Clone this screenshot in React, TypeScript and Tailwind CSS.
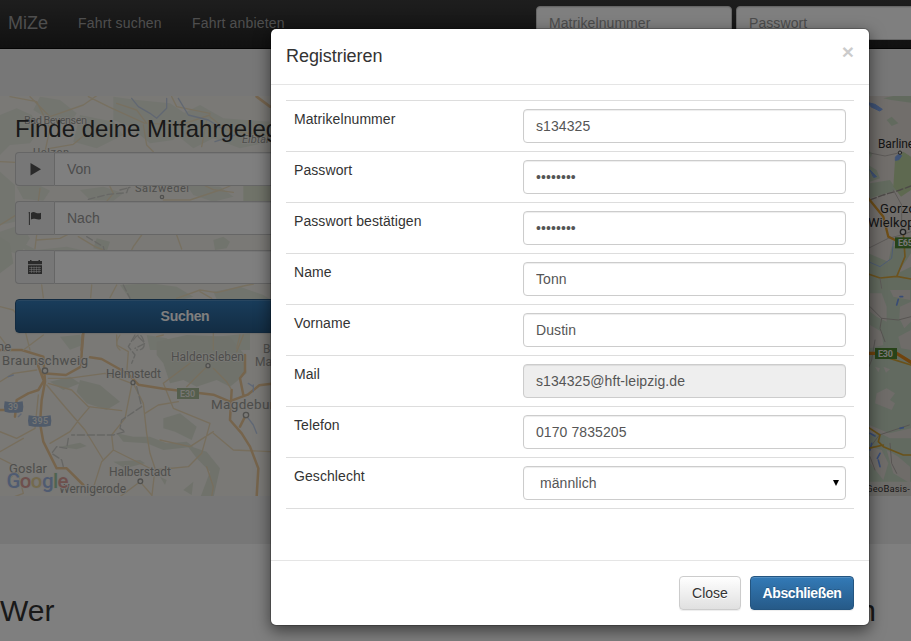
import type { ReactNode } from "react";

const control =
  "block h-[34px] w-full rounded-[4px] border border-[#ccc] px-3 py-1.5 text-[14px] leading-5 tracking-[0.08px] text-[#555] shadow-[inset_0_1px_1px_rgba(0,0,0,0.075)] outline-none placeholder:text-[#999]";

type Field = { label: string; type: "text" | "password" | "readonly" | "select"; value: string };

const fields: Field[] = [
  { label: "Matrikelnummer", type: "text", value: "s134325" },
  { label: "Passwort", type: "password", value: "geheim12" },
  { label: "Passwort bestätigen", type: "password", value: "geheim12" },
  { label: "Name", type: "text", value: "Tonn" },
  { label: "Vorname", type: "text", value: "Dustin" },
  { label: "Mail", type: "readonly", value: "s134325@hft-leipzig.de" },
  { label: "Telefon", type: "text", value: "0170 7835205" },
  { label: "Geschlecht", type: "select", value: "männlich" },
];

function MapBackground() {
  return (
    <svg
      className="absolute inset-0 h-full w-full font-[Roboto,sans-serif]"
      viewBox="0 96 911 400"
      preserveAspectRatio="none"
      fill="none"
      strokeLinejoin="round"
      strokeLinecap="round"
    >
      <rect x="0" y="96" width="911" height="400" fill="#f4f2ec" />
      {/* woodland, north west */}
      <g transform="translate(0 95) scale(.33333)" fill="#e6eadf">
        <path d="M0 60l50-20 45 20 25 45-30 40-60 5-30 30zM120 5l60 10 50 40-20 30-60-10-50-30zM240 60l100 20 30 40-80 40-70-20zM340 5l70 10 100 10 60 40-50 70-70 10-60-50-50-20zM540 60l60-30 70 40 140 10v60l-90 20-80-30-60 30-50-40zM0 230l45 40v110l-45 10z" />
        <path d="M50 275l60-8 40 20-20 30-60-5zM240 285l70-10 60 20-30 22-70-2zM560 270l100 5 40 30-60 15-60-20zM0 410l60-20 30 40-30 50-60-20zM60 440l50 25 90-10 60 14-80 10-100-5z" />
        <path d="M730 273h80v45h-80z" fill="#e1e6d2" />
      </g>
      <g transform="translate(0 220) scale(.33333)" fill="#e3e8da">
        <path d="M0 50l30 20 10 60-40 30zM290 55l40 10-10 30-40-10zM640 60l30-10 20 15-10 20-35 5zM360 195l90-5 80 10 50 30-30 8H390zM640 215l80-15 70 25 20 13H650zM180 350l60-6 10 30-40 15zM440 345l60 10 40 35h-90zM650 350l100-10v50H640z" />
      </g>
      <g transform="translate(0 335) scale(.33333)">
        <g fill="#e0e5d7">
          <path d="M470 20l90-20 130 5 40 50 10 60-50 40-40-20-60 20-40-20-40 10-20-60-20-25zM240 135l60 15 60 50-40 25-60-20-30-35zM150 140l60-15 30 20-50 20zM350 295l50 10 50 0 50 20 60-5 20 15-90 10-50-20-70-5zM490 250l50-15 50 40-15 40-50-25-35-10zM560 330l60 20 40 50-20 90h-40l30-80-40-40zM340 380l80-5 15 10-60 15zM180 335l60-12 20 10-30 10zM480 425l20 10-5 15zM550 465l30-25-5 40z" />
        </g>
        <g stroke="#eedcba" strokeWidth="4">
          <path d="M0 140l40-25 70-10M145 130l60 0 110-15 80 30M145 145l70 20 50 50 100 12M270 215l-30 35-30 40-60 35M140 150l50 60 65 75 55 90 30-30 120 60 105-10 40-40 25-90-110-45-30-75 80-60M395 150l-20 100-40 50 5 45-35 35-35 110M400 145l30 60 10 90 10 60 15 45-10 90M435 235l40-25 60-10M0 290l50 20 55-30 10-100M0 350l70-40M350 0l0 30 35 20-5 65M620 95l-40 40-20 20M640 100l40 40 12 20M640 295l60 50 110 5M620 395l20 60-5 30M0 370l50 25 20 80-40 15M470 5l20-5M730 0l-20 50M420 440l35 40M420 440l-60 45M30 430l30-30M640 290l-70 45-90-20" />
        </g>
        <g stroke="#ecc998" strokeWidth="7.5">
          <path d="M0 45h65l65 20M110 80l22 60M248 0l-5 95-45 25-70-5M270 67l35 5 80 45 30 32 75 12 150 18 48 20 55-20 35-28 37-5M130 65l5 75-10 55-5 70 10 55 40 80h30l50 50M130 140l-15 25-30 10-35 20-5 50M0 225h40M695 165l-5 90 35 40 25 40 25 65-5 85M735 60v50l-15 20 10 50M740 235l-20 40" />
        </g>
        <path d="M405 0l-20 35 20 25-10 25M415 5l20 20-30 15M410 155l15 60-60 40-5 25 15 10-35 10H215M205 310l-5 30-30-5-15 20 30 20 5 20" stroke="#cdcdc8" strokeWidth="4" strokeDasharray="22 8" />
        <path d="M745 145l15 10M760 150v20M745 250l15 20 10 25M55 245l8-8M40 120l-15 5" stroke="#c0d0ea" strokeWidth="4" />
        <g fill="#f4f2ec" stroke="#a0a09c" strokeWidth="4">
          <circle cx="135" cy="107" r="8" />
          <circle cx="399" cy="143" r="6" />
          <circle cx="624" cy="92" r="6" />
          <circle cx="738" cy="240" r="8" />
          <circle cx="421" cy="439" r="7" />
        </g>
        <path d="M14 199q27 7 54 0l2 16-2 15q-27 7-54 0l-2-15z" fill="#a0b6d4" />
        <path d="M86 241q33 7 66 0l2 16-2 15q-33 7-66 0l-2-15z" fill="#a0b6d4" />
        <path d="M531 159h66v33h-66z" fill="#abbd9b" />
      </g>
      {/* minor roads and river, north west */}
      <g transform="translate(0 95) scale(.33333)" stroke="#efe0c1" strokeWidth="4">
        <path d="M30 5l80 15 40 80-15 70M90 5l60 60 100-35 40-28M265 5l60 30 110 50M430 90l10 60 20 20M450 85l90 5 90-30M440 85l-30-40-60-20M515 5l15 30 100 20M620 75l-15 80M630 65l50 40 130 20M0 200l48 2M150 160l70-12 30-25M120 280l-5 38M490 315l80 0 90-30 30-12M330 275l10 20-20 24M610 270l30 14 60 8M0 390l45-28" />
        <path d="M770 5l40 30" stroke="#ecca9e" strokeWidth="8" />
        <path d="M395 10l20 25 35 20 20 15 30-30 0-30M535 10l30 50 60 15 40 25M645 140l60-20" stroke="#c2cfe4" />
        <path d="M265 313l60-15 55-5 5-15M360 285l30-8" stroke="#cfcfca" strokeDasharray="20 9" />
        <circle cx="486" cy="306" r="5" stroke="#a0a09c" />
      </g>
      <g transform="translate(0 220) scale(.33333)" stroke="#efe0c1" strokeWidth="4">
        <path d="M110 45l-5 40M110 60l70-5 40-20M235 50l50 30 30 12M425 45l-25 35-5 10M530 45l15 42M125 195l5 38M275 195l-3 38M350 195l-20 38M530 235l70-25 50 8 80-20 30-6M600 215l35 20M0 260l40 10 30 40 20 80M130 345l-60 45M360 345q-20 30 0 45M640 340v50M720 345l-10 40M0 350l30 40" />
        <path d="M250 340l-5 50" stroke="#ecca9e" strokeWidth="8" />
        <path d="M260 50l50 30 5 20M370 195l20 40M400 360q20-30 30 0t-20 30" stroke="#cfcfca" strokeDasharray="20 9" />
      </g>
      <g fill="#9c9c98" stroke="#f4f2ec" strokeWidth="1.5" paintOrder="stroke" fontSize="11">
        <text x="24" y="123.5" textLength="63">Bad Bevensen</text>
        <text x="33" y="156" textLength="36">Uelzen</text>
        <text x="135" y="192" textLength="54">Salzwedel</text>
        <text x="242" y="143" fontStyle="italic">Elbtal</text>
        <text x="-3" y="350.5" fontSize="13">ne</text>
        <text x="2" y="365" fontSize="13" textLength="86">Braunschweig</text>
        <text x="106" y="378" fontSize="12" textLength="55">Helmstedt</text>
        <text x="171" y="361" fontSize="12" textLength="73">Haldensleben</text>
        <text x="263" y="353" fontSize="12">B</text>
        <text x="255" y="366" fontSize="12">Ma</text>
        <text x="211" y="409" fontSize="13.5" textLength="71">Magdeburg</text>
        <text x="9" y="472.5" fontSize="13" textLength="38">Goslar</text>
        <text x="109" y="476" fontSize="12" textLength="62">Halberstadt</text>
        <text x="59" y="493" fontSize="12" textLength="67">Wernigerode</text>
      </g>
      <g fill="#efeee9" fontWeight="500" fontSize="9">
        <text x="8" y="410" textLength="10">39</text>
        <text x="32" y="424" textLength="16">395</text>
        <text x="180" y="397" textLength="15">E30</text>
      </g>
      <text x="6.5" y="488" fontSize="20.5" fontWeight="500" className="font-[Roboto,sans-serif]" textLength="62" stroke="#f0eeea" strokeWidth="1.6" paintOrder="stroke">
        <tspan fill="#9fb6e2">G</tspan>
        <tspan fill="#dda09a">o</tspan>
        <tspan fill="#e8d59c">o</tspan>
        <tspan fill="#9fb6e2">g</tspan>
        <tspan fill="#9ec8a2">l</tspan>
        <tspan fill="#dda09a">e</tspan>
      </text>

      {/* eastern part of the map */}
      <rect x="700" y="96" width="211" height="400" fill="#e2dcd7" />
      <g transform="translate(850 90) scale(.33333)">
        <path d="M100 25l50-12 33 5v20l-60-8zM110 90l15-10 20 20-20 8zM55 225l25 15 10 25-30 10zM55 180l12 10-5 15zM55 490l60 25 10-45 58-10v30l-40 60 40-20v70H55zM60 280l60-10 20 30-80 25z" fill="#c5d5bd" />
        <path d="M135 210l25-25 23 15v100l-30 20-23-30z" fill="#bcd2a0" />
        <path d="M60 330l40-15 50-15 33-12" stroke="#9a948f" strokeWidth="4" strokeDasharray="20 8" />
        <path d="M55 188l50 10 45-10M55 475l60-30 40-10 28-10M130 300l25 45 0 80" stroke="#b9b3ae" strokeWidth="3" />
        <path d="M55 38l20 5 22 15-8 5-25-12zM60 240l20 20-8 2zM137 200l10-8 8 5-8 12-10 2z" fill="#7fa6ec" stroke="#7fa6ec" strokeWidth="3" />
        <path d="M55 515l35 15 35-25 5-50" stroke="#9cb8e8" strokeWidth="3" />
        <path d="M55 325l45 55 15 60 20 10" stroke="#dc9c30" strokeWidth="7" />
        <path d="M160 430l5 70-25 60M55 552l35 12 50-5 43 8" stroke="#d8a63c" strokeWidth="5" />
        <path d="M90 565l5 30" stroke="#b9b3ae" strokeWidth="3" />
        <circle cx="150" cy="188" r="5" fill="#eee" stroke="#444" strokeWidth="3" />
        <circle cx="159" cy="426" r="8" fill="#eee" stroke="#444" strokeWidth="4" />
        <path d="M135 442h55v33h-55z" fill="#4f8632" />
      </g>
      <g transform="translate(850 290) scale(.33333)">
        <path d="M55 0h128v590H55z" fill="#c4d4c0" />
        <path d="M60 10l35 0 15 40 0 45-30-15-20-15zM120 0l60 0v30l-50-10zM150 50l33-15v60l-20 20-15-30zM60 105l35 20 5 40-40 10zM145 140l38-20v60l-30-5zM80 310l30-15 25 15-15 20 15 10-10 20-50-20zM58 405l60 25 65-15v30H120l-30-15-30 5zM60 470l35 10 20 40-15 50-40-50zM110 480l35 20 35 30v50l-50-30zM75 230l15 5-5 12zM100 230l20 8-12 10z" fill="#ded8d3" />
        <path d="M60 50l35 35 50 5 38-10M95 85l-5 30 15 40M75 150l-10 60-8 20M58 475l30-40 90-30M120 460l5 60 15 30M60 500l15 40" stroke="#b0aaa5" strokeWidth="3" />
        <path d="M150 20l8 0M145 28l-5 17M60 430l15 8M65 460l-5 20M90 490l-8 15M85 510l5 20M150 415l10-2" stroke="#7299ea" strokeWidth="5" />
        <path d="M55 190h85l43 27" stroke="#e0871a" strokeWidth="10" />
        <path d="M120 205l63 20M55 412l35 23-5 20 15 15 60 25h23M55 475l45-10" stroke="#d2a232" strokeWidth="5" />
        <path d="M75 174h66v33H75z" fill="#4f8632" />
        <path d="M0 575h183v50H0z" fill="#dcdad4" />
      </g>
      <g fill="#292929" stroke="#e2dcd7" strokeWidth="1.2" paintOrder="stroke" fontSize="12">
        <text x="878" y="148" textLength="42">Barlinek</text>
        <text x="880" y="213" fontSize="13" textLength="46">Gorzów</text>
        <text x="868" y="227" fontSize="13" textLength="74">Wielkopolski</text>
        <text x="866" y="492" fontSize="9.5" textLength="44" fill="#333">GeoBasis-</text>
      </g>
      <g fill="#eee" fontSize="9" fontWeight="700">
        <text x="898" y="246.3" textLength="15">E65</text>
        <text x="878" y="357.3" textLength="15">E30</text>
      </g>
    </svg>
  );
}

function SearchRow({ icon, placeholder }: { icon: ReactNode; placeholder?: string }) {
  return (
    <div className="mb-[15px] flex h-[34px]">
      <span className="flex w-[39px] shrink-0 items-center justify-center rounded-l-[4px] border border-r-0 border-[#ccc] bg-[#eee] pr-px text-[#555]">
        {icon}
      </span>
      <input
        placeholder={placeholder}
        className="min-w-0 flex-1 rounded-r-[4px] border border-[#ccc] bg-white px-3 text-[14px] shadow-[inset_0_1px_1px_rgba(0,0,0,0.075)] placeholder:text-[#999]"
      />
    </div>
  );
}

const playIcon = (
  <svg width="14" height="14" viewBox="0 0 14 14" fill="currentColor">
    <path d="M2.5 1L13 7.2 2.5 13.4z" />
  </svg>
);

const flagIcon = (
  <svg width="14" height="14" viewBox="0 0 14 14" fill="currentColor">
    <path d="M.7 1h1.2v13H.9L.9 2.5H.7zM3 2c1.5-1.2 3.2-1.1 4.8-.3 1.7.8 3.3.8 5.2 0v6.2c-1.9.9-3.5.8-5.2.2-1.6-.6-3.2-.7-4.8.4z" />
  </svg>
);

const calendarIcon = (
  <svg width="14" height="14" viewBox="0 0 14 14" fill="currentColor">
    <path d="M0 1h2V0h1.5v1h7V0H12v1h2v3.2H0z" />
    <path d="M0 5.2h14V14H0z" />
    <path d="M1 7.5h12M1 9.5h12M1 11.5h12M3.5 6.5V13M6 6.5V13M8.5 6.5V13M11 6.5V13" stroke="#eee" strokeWidth=".5" fill="none" />
  </svg>
);

function FieldControl({ field }: { field: Field }) {
  if (field.type === "select") {
    return (
      <div className="relative">
        <select defaultValue={field.value} className={`${control} appearance-none bg-white pl-4`}>
          <option>{field.value}</option>
        </select>
        <svg className="absolute top-[14px] right-[7px]" width="6" height="6" viewBox="0 0 6 6">
          <path d="M0 0h6L3 6z" fill="#000" />
        </svg>
      </div>
    );
  }
  const readOnly = field.type === "readonly";
  return (
    <input
      type={field.type === "password" ? "password" : "text"}
      defaultValue={field.value}
      readOnly={readOnly}
      className={`${control} ${readOnly ? "bg-[#eee]" : "bg-white"}`}
    />
  );
}

export default function App() {
  return (
    <div className="relative h-[641px] w-full overflow-hidden bg-white font-['Liberation_Sans',Arial,sans-serif] text-[14px] leading-5 text-[#333]">
      <nav className="flex h-[49px] items-start border-b border-[#080808] bg-linear-to-b from-[#3c3c3c] to-[#222] text-[#9d9d9d]">
        <span className="w-[55px] pt-[13px] pl-2 text-[18px]">MiZe</span>
        <span className="w-[137px] pt-[13px] pl-[23px] pr-[30px] tracking-[0.17px] whitespace-nowrap">Fahrt suchen</span>
        <span className="pt-[13px] tracking-[0.17px] whitespace-nowrap">Fahrt anbieten</span>
        <div className="mt-1.5 ml-auto flex w-[375px] shrink-0 gap-1 overflow-hidden">
          <div className="w-[196px] shrink-0">
            <input placeholder="Matrikelnummer" className={`${control} bg-white`} />
          </div>
          <div className="w-[196px] shrink-0">
            <input placeholder="Passwort" className={`${control} bg-white`} />
          </div>
        </div>
      </nav>

      <section className="h-[495px] bg-[#eee] pt-[47px]">
        <div className="relative h-[400px] overflow-hidden">
          <div className="absolute inset-0">
            <MapBackground />
          </div>
          <div className="relative w-[355px] pt-[19px] pl-[15px]">
            <h3 className="mb-[10px] text-[24px] leading-[27px] whitespace-nowrap">Finde deine Mitfahrgelegenheit</h3>
            <SearchRow icon={playIcon} placeholder="Von" />
            <SearchRow icon={flagIcon} placeholder="Nach" />
            <SearchRow icon={calendarIcon} />
            <button className="h-[34px] w-full rounded-[4px] border border-[#245580] bg-linear-to-b from-[#337ab7] to-[#265a88] font-bold tracking-[-0.3px] text-white shadow-[inset_0_1px_0_rgba(255,255,255,0.15),0_1px_1px_rgba(0,0,0,0.075)] [text-shadow:0_-1px_0_rgba(0,0,0,0.2)]">
              Suchen
            </button>
          </div>
        </div>
      </section>

      <div className="flex justify-between pt-[50px] pr-[35px] text-[30px] leading-[33px]">
        <h2>Wer</h2>
        <h2>Wann</h2>
      </div>

      <div className="absolute inset-0 bg-black/50" />

      <div
        role="dialog"
        className="absolute top-[28px] left-[270px] w-[600px] rounded-[6px] border border-black/20 bg-white bg-clip-padding shadow-[0_5px_15px_rgba(0,0,0,0.5)]"
      >
        <div className="flex h-14 items-start justify-between border-b border-[#e5e5e5] px-[15px] pt-[13px]">
          <h4 className="pt-px text-[18px] leading-[26px] tracking-[-0.05px]">Registrieren</h4>
          <button className="text-[21px] leading-[20px] font-bold text-black opacity-20 [text-shadow:0_1px_0_#fff]">×</button>
        </div>
        <div className="h-[475px] px-[15px] pt-[15px]">
          <div className="border-b border-[#ddd]">
            {fields.map((field) => (
              <div key={field.label} className="flex h-[51px] border-t border-[#ddd] p-2">
                <label className="w-[229px] shrink-0 tracking-[0.08px]">{field.label}</label>
                <div className="flex-1">
                  <FieldControl field={field} />
                </div>
              </div>
            ))}
          </div>
        </div>
        <div className="flex justify-end gap-[9px] border-t border-[#e5e5e5] p-[15px]">
          <button className="h-[34px] w-[62px] rounded-[4px] border border-[#ccc] bg-linear-to-b from-white to-[#e0e0e0] shadow-[inset_0_1px_0_rgba(255,255,255,0.15),0_1px_1px_rgba(0,0,0,0.075)] [text-shadow:0_1px_0_#fff]">
            Close
          </button>
          <button className="h-[34px] w-[104px] rounded-[4px] border border-[#245580] bg-linear-to-b from-[#337ab7] to-[#265a88] font-bold tracking-[-0.4px] text-white shadow-[inset_0_1px_0_rgba(255,255,255,0.15),0_1px_1px_rgba(0,0,0,0.075)] [text-shadow:0_-1px_0_rgba(0,0,0,0.2)]">
            Abschließen
          </button>
        </div>
      </div>
    </div>
  );
}
